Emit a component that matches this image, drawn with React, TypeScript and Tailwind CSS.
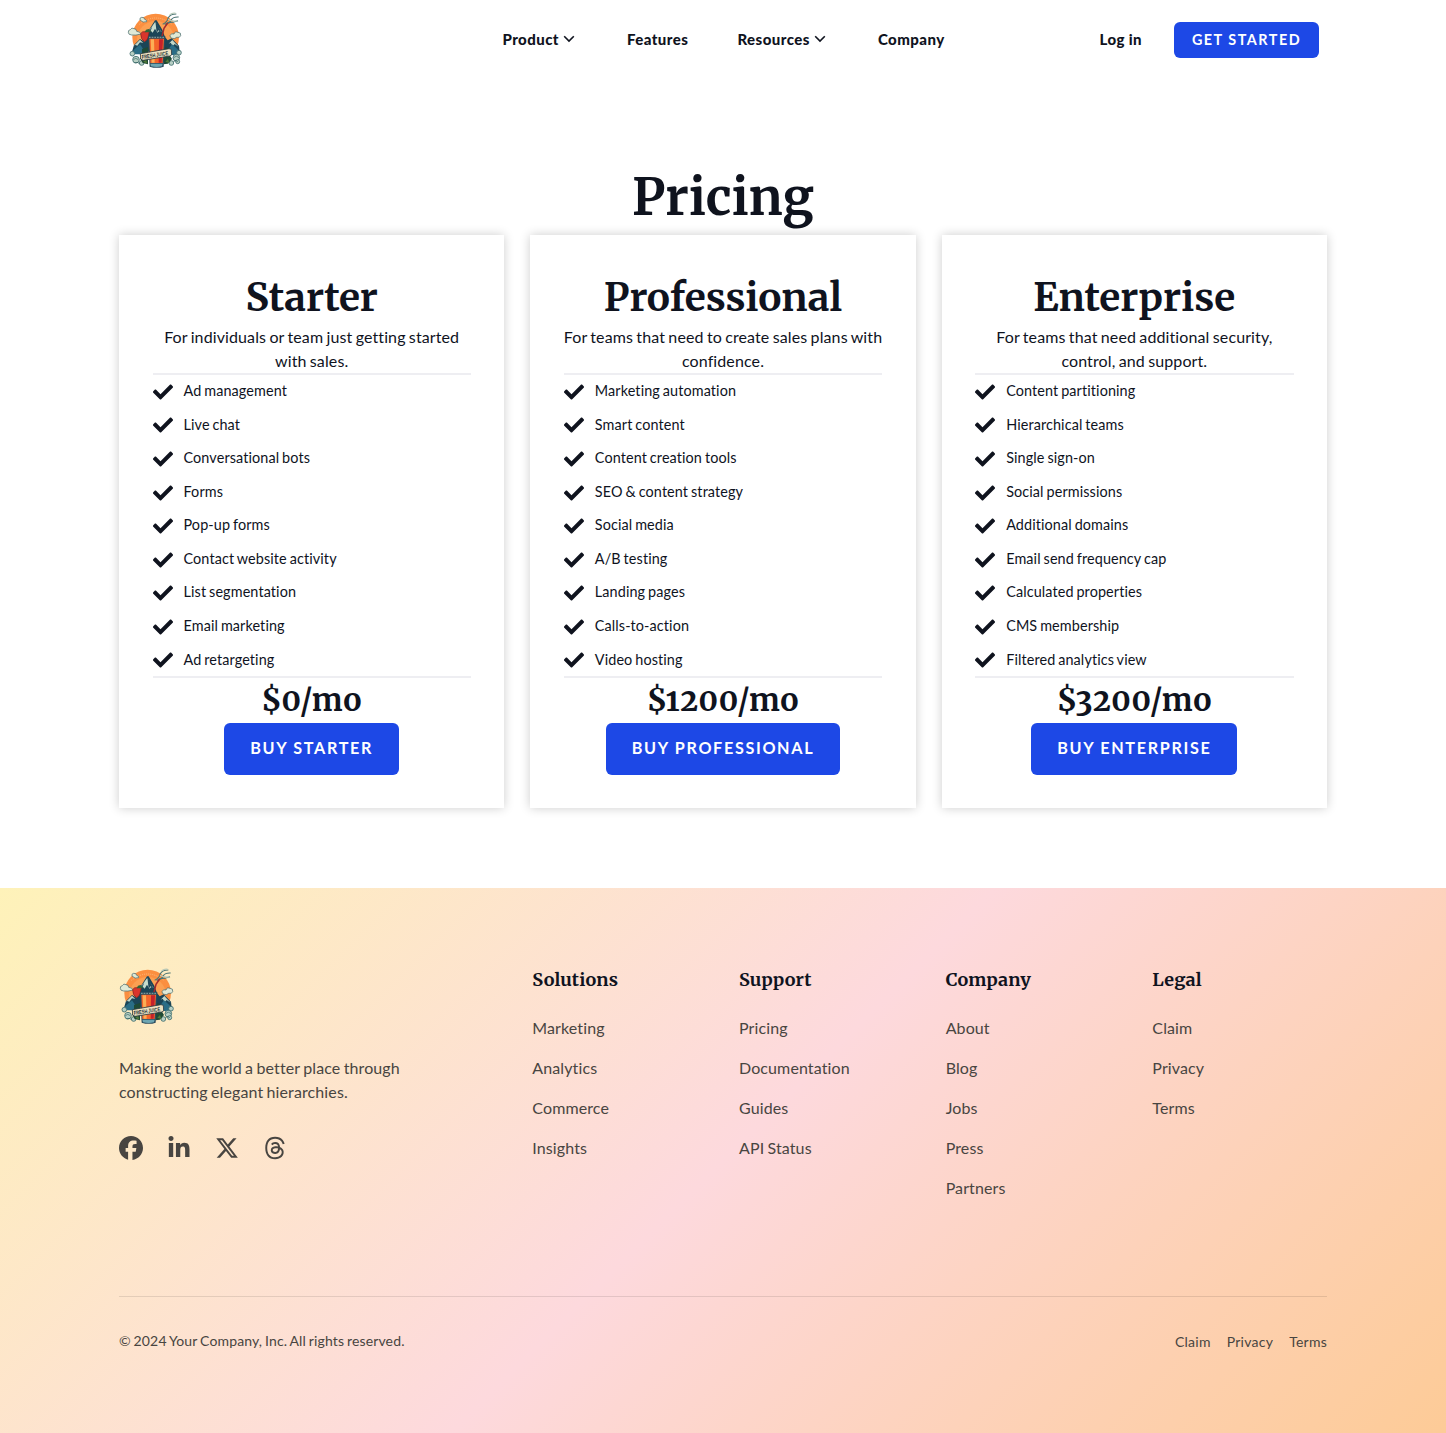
import React from "react";
import { FaCheck } from "react-icons/fa";
import { FaFacebook, FaLinkedinIn, FaXTwitter, FaThreads } from "react-icons/fa6";

const plans = [
  {
    name: "Starter",
    blurb: "For individuals or team just getting started with sales.",
    price: "$0/mo",
    features: ["Ad management", "Live chat", "Conversational bots", "Forms", "Pop-up forms", "Contact website activity", "List segmentation", "Email marketing", "Ad retargeting"],
  },
  {
    name: "Professional",
    blurb: "For teams that need to create sales plans with confidence.",
    price: "$1200/mo",
    features: ["Marketing automation", "Smart content", "Content creation tools", "SEO & content strategy", "Social media", "A/B testing", "Landing pages", "Calls-to-action", "Video hosting"],
  },
  {
    name: "Enterprise",
    blurb: "For teams that need additional security, control, and support.",
    price: "$3200/mo",
    features: ["Content partitioning", "Hierarchical teams", "Single sign-on", "Social permissions", "Additional domains", "Email send frequency cap", "Calculated properties", "CMS membership", "Filtered analytics view"],
  },
];

const columns = [
  { title: "Solutions", links: ["Marketing", "Analytics", "Commerce", "Insights"] },
  { title: "Support", links: ["Pricing", "Documentation", "Guides", "API Status"] },
  { title: "Company", links: ["About", "Blog", "Jobs", "Press", "Partners"] },
  { title: "Legal", links: ["Claim", "Privacy", "Terms"] },
];

function Logo() {
  return (
    <svg viewBox="21 21 168 168" className="size-14 shrink-0" aria-label="Fresh Juice">
      <circle cx="107" cy="96" r="70" fill="#fb8f40" />
      <circle cx="107" cy="104" r="56" fill="#fca052" />
      <path d="M58 58q49-38 98 0" fill="none" stroke="#fcb97c" strokeWidth="3" strokeDasharray="3 3" />
      <path d="M36 140l6-20 18-18 14 8 4-24 12-16 15-24h5l17 28 8 22 8 10 12-6 22 22 2 18z" fill="#1b4557" />
      <path d="M86 78l20-28 7 14 12 16-7-2-6 5-7-12-7 12-5-5z" fill="#c8dccd" />
      <path d="M106 48l19 34-10-6-5 8zM97 64l-8 22-5-2z" fill="#22485a" />
      <path d="M42 122l18-18 10 10-10-2-8 10-6-2zM146 116l11-11 19 20-12-8-6 6-6-10z" fill="#c3d7c8" />
      <path d="M40 136l20-18 12 18-4 12H44zM140 140l16-22 20 18-4 14h-28z" fill="#2a6d86" />
      <g fill="#dfe9d6" stroke="#3d6266" strokeWidth="2">
        <path d="M25 82q-1-7 6-8 4-8 11-3 8 0 8 8 11 1 13 8-17 5-28 3-11-1-10-8z" />
        <path d="M60 45q-2-7 5-8 8-1 9 6 8 2 6 7-11 5-20-5z" />
        <path d="M150 92q4-9 12-5 2-9 12-5 10 0 8 10-2 7-12 5-6 6-14 3-6-2-6-8z" />
      </g>
      <g fill="none" stroke="#4c7474" strokeWidth="3.5">
        <path d="M128 58q14-6 17-20 6-11 24-11" />
        <path d="M134 58q18-4 20-14 6-9 22-8" />
        <path d="M142 53q18 0 32-6" />
        <path d="M149 29q9-6 18-4" stroke="#b8c9b8" />
        <path d="M144 43q10 7 28 5" stroke="#b8c9b8" />
      </g>
      <g fill="#b7cfc4" stroke="#3c6b6c" strokeWidth="2.5">
        <circle cx="37" cy="146" r="7" />
        <circle cx="48" cy="164" r="10" />
        <circle cx="65" cy="174" r="7" />
        <circle cx="177" cy="143" r="7" />
        <circle cx="169" cy="158" r="10" />
        <circle cx="173" cy="170" r="6" />
        <circle cx="154" cy="174" r="7" />
      </g>
      <path d="M40 164q7-8 15 0M161 158q8-9 16 0M44 174q8-5 14 2M160 170q8-6 14 0" fill="none" stroke="#31605f" strokeWidth="2" />
      <path d="M66 132l18-6v52l-16-4-8-14 6-4zM134 126l12 4 4 22 6 10-12 14-14 2z" fill="#1f4a35" />
      <path d="M70 170l8-8 4 14zM136 170l8-8 4 12z" fill="#4f7a3a" />
      <path d="M126 94l6-24 11-16" fill="none" stroke="#a3292c" strokeWidth="4.5" />
      <path d="M62 86q4-8 14-6l12-2-2 10q-2 18-12 22-12-6-12-24z" fill="#d9352c" stroke="#7a2522" strokeWidth="2" />
      <path d="M74 82l4-8 8-2 8 8-10 2z" fill="#2f6438" />
      <path d="M84 93h52l-5 92q-20 7-42 0z" fill="#2a4a5c" />
      <path d="M88 101h44l-4 73H91z" fill="#f4642a" />
      <path d="M92 103h10l2 70H95z" fill="#fcae55" />
      <path d="M117 103h12l-4 70h-9z" fill="#c5222b" />
      <path d="M91 176h37l-2 8q-16 4-33 0z" fill="#6ea6b2" />
      <path d="M87 97h46" stroke="#8ba9a4" strokeWidth="3" strokeDasharray="5 3" />
      <path d="M61 146l86-15 7 2 1 17-6 3-80 13-7-4z" fill="#eee2c1" stroke="#2c3c43" strokeWidth="2.5" />
      <text x="66" y="162" transform="rotate(-8.5 66 162)" textLength="80" lengthAdjust="spacingAndGlyphs" fontFamily="Liberation Sans" fontWeight="700" fontSize="17" letterSpacing="0" wordSpacing="0" fill="#26323a">
        FRESH JUICE
      </text>
    </svg>
  );
}

function Chevron() {
  return (
    <svg viewBox="0 0 12 8" className="ml-1 h-2 w-3" fill="none" stroke="#10141f" strokeWidth="1.6">
      <path d="M1.2 1.2 6 6l4.8-4.8" />
    </svg>
  );
}

export default function App() {
  return (
    <div className="min-h-[1433px] w-full bg-white font-['Lato',sans-serif] tracking-[0.11px] [word-spacing:-0.9px] text-[#0f131e] [font-variant-ligatures:none]">
      <header className="mx-auto flex h-20 w-[1192px] items-center [word-spacing:0px]">
        <div className="flex-1">
          <Logo />
        </div>
        <nav className="flex items-center pb-0.5 pl-px text-[15px] leading-6 font-black tracking-[0.45px]">
          <a className="flex w-[124.5px] items-center">Product<Chevron /></a>
          <a className="w-[110.5px]">Features</a>
          <a className="flex w-[140.5px] items-center">Resources<Chevron /></a>
          <a>Company</a>
        </nav>
        <div className="flex flex-1 items-center justify-end gap-8">
          <a className="pb-0.5 text-[15px] leading-6 font-black tracking-[0.4px]">Log in</a>
          <a className="flex h-9 w-[145px] items-center justify-center rounded-md bg-[#1d48e6] pb-px text-[14.4px] font-bold tracking-[1.5px] text-white">GET STARTED</a>
        </div>
      </header>

      <main className="mx-auto h-[808px] w-[1208px] pt-[78px]">
        <h1 className="h-[77px] text-center font-['Merriweather',serif] text-[50.4px] leading-[79px] font-bold tracking-normal">Pricing</h1>
        <div className="grid h-[573px] grid-cols-3 gap-[26px]">
          {plans.map((p) => (
            <section key={p.name} className="flex flex-col bg-white px-[33.5px] pt-[33px] shadow-[0_0_10px_rgba(0,0,0,0.2)]">
              <h2 className="h-[57px] text-center font-['Merriweather',serif] text-[38.8px] leading-[59px] font-bold tracking-normal">{p.name}</h2>
              <p className="-mx-1 h-[48px] text-center text-base leading-6">{p.blurb}</p>
              <ul className="h-[305px] border-y-2 border-[#eeeef2]">
                {p.features.map((f) => (
                  <li key={f} className="flex h-[33.58px] items-center gap-[11px] text-[14.4px]">
                    <FaCheck className="size-5 shrink-0" />
                    <span className="relative -top-px">{f}</span>
                  </li>
                ))}
              </ul>
              <div className="h-[44.5px] text-center font-['Merriweather',serif] text-[30.6px] leading-[45px] font-bold tracking-[0.6px] [font-feature-settings:'onum']">{p.price}</div>
              <a className="flex h-[52px] items-center self-center rounded-md bg-[#1d48e6] px-[26px] pb-px text-[16.2px] font-bold tracking-[1.65px] text-white uppercase [word-spacing:0px]">Buy {p.name}</a>
            </section>
          ))}
        </div>
      </main>

      <footer className="h-[545px] bg-[linear-gradient(135deg,#fef2b9,#fdd9dd,#fdcb97)] pt-20 text-[#484541]">
        <div className="mx-auto w-[1208px]">
          <div className="grid grid-cols-3 gap-8">
            <div>
              <Logo />
              <p className="mt-8 w-[320px] text-base leading-6">Making the world a better place through constructing elegant hierarchies.</p>
              <div className="mt-8 flex gap-6 text-2xl">
                <FaFacebook />
                <FaLinkedinIn />
                <FaXTwitter />
                <FaThreads />
              </div>
            </div>
            <div className="col-span-2 grid grid-cols-4 gap-8">
              {columns.map((c) => (
                <div key={c.title}>
                  <h3 className="font-['Merriweather',serif] text-[18px] leading-6 font-bold tracking-[0.16px] text-[#0f131e]">{c.title}</h3>
                  <ul className="mt-6 space-y-4">
                    {c.links.map((l) => (
                      <li key={l} className="text-base leading-6">{l}</li>
                    ))}
                  </ul>
                </div>
              ))}
            </div>
          </div>
          <div className="mt-24 flex justify-between border-t border-black/10 pt-8 text-sm leading-6">
            <p className="tracking-[0.14px]">© 2024 Your Company, Inc. All rights reserved.</p>
            <div className="flex gap-4 pt-px tracking-[0.25px]">
              <a>Claim</a>
              <a>Privacy</a>
              <a>Terms</a>
            </div>
          </div>
        </div>
      </footer>
    </div>
  );
}
